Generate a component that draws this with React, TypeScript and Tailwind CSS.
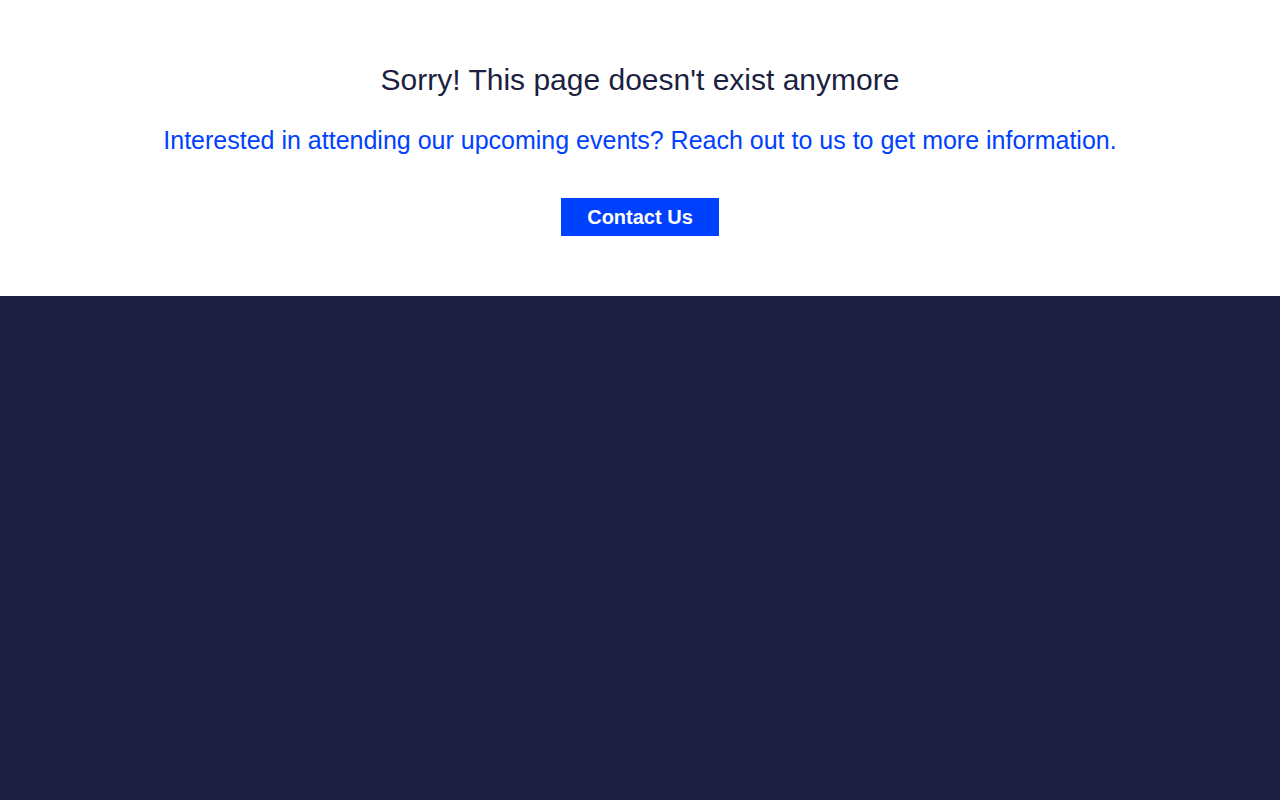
export default function App() {
  return (
    <div className="flex min-h-[800px] flex-col font-['Liberation_Sans',Arial,sans-serif]">
      <section className="flex flex-col items-center bg-white pt-[63px] pb-[60px] text-center">
        <h1 className="text-[30px] leading-[34px] text-[#1c1f40]">
          Sorry! This page doesn't exist anymore
        </h1>
        <p className="mt-[29px] text-[25px] leading-[29px] text-[#0041ff]">
          Interested in attending our upcoming events? Reach out to us to get more information.
        </p>
        <button className="mt-[43px] h-[38px] w-[158px] bg-[#0041ff] text-[20px] font-bold text-white">
          Contact Us
        </button>
      </section>
      <footer className="flex-1 bg-[#1c1f40]" />
    </div>
  );
}
